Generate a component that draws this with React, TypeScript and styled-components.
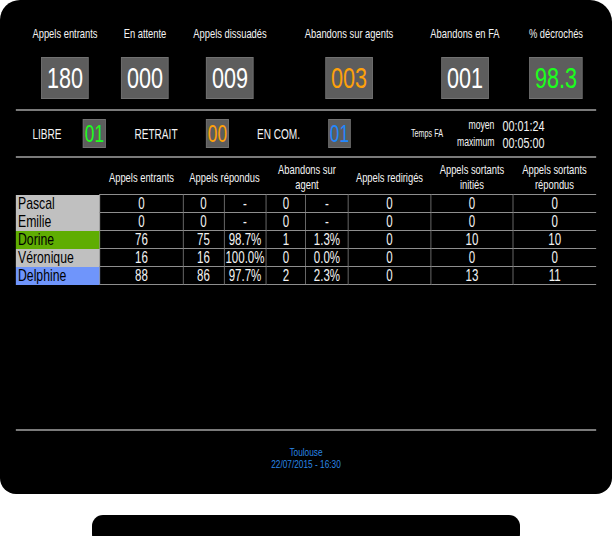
import styled, { createGlobalStyle } from 'styled-components';

// the wallboard font is a narrow grotesque: we lay out wide and squeeze the whole screen
const SQUEEZE = 0.72;
const w = (px: number) => `${(px / SQUEEZE).toFixed(2)}px`;

interface Counter {
  label: string;
  value: string;
  color: string;
}

interface Agent {
  name: string;
  bg: string;
  values: string[];
}

const counters: Counter[] = [
  { label: 'Appels entrants', value: '180', color: '#ffffff' },
  { label: 'En attente', value: '000', color: '#ffffff' },
  { label: 'Appels dissuadés', value: '009', color: '#ffffff' },
  { label: 'Abandons sur agents', value: '003', color: '#ffa10a' },
  { label: 'Abandons en FA', value: '001', color: '#ffffff' },
  { label: '% décrochés', value: '98.3', color: '#1cff1c' },
];

const counterWidths = [98, 62, 108, 130, 102, 80];

const agents: Agent[] = [
  { name: 'Pascal', bg: '#c0c0c0', values: ['0', '0', '-', '0', '-', '0', '0', '0'] },
  { name: 'Emilie', bg: '#c0c0c0', values: ['0', '0', '-', '0', '-', '0', '0', '0'] },
  { name: 'Dorine', bg: '#5fad02', values: ['76', '75', '98.7%', '1', '1.3%', '0', '10', '10'] },
  { name: 'Véronique', bg: '#c0c0c0', values: ['16', '16', '100.0%', '0', '0.0%', '0', '0', '0'] },
  { name: 'Delphine', bg: '#6f95fb', values: ['88', '86', '97.7%', '2', '2.3%', '0', '13', '11'] },
];

const columnWidths = [84, 83, 41, 42, 40, 42, 83, 82, 83];

const GlobalStyle = createGlobalStyle`
  html, body {
    margin: 0;
    padding: 0;
    background: #fff;
  }
  body {
    font-family: 'Liberation Sans', Arial, sans-serif;
  }
`;

const Monitor = styled.div`
  width: 612px;
  height: 536px;
  overflow: hidden;
  display: flex;
  flex-direction: column;
  align-items: center;
`;

const Screen = styled.div`
  width: 612px;
  height: 494px;
  flex-shrink: 0;
  background: #000;
  border-radius: 20px 22px 16px 16px;
  overflow: hidden;
`;

const Content = styled.div`
  width: ${w(612)};
  height: 100%;
  box-sizing: border-box;
  padding: 26px ${w(16)} 0;
  display: flex;
  flex-direction: column;
  color: #f4f4f4;
  transform: scaleX(${SQUEEZE});
  transform-origin: 0 0;
`;

const Stand = styled.div`
  width: 428px;
  height: 30px;
  flex-shrink: 0;
  margin-top: 21px;
  background: #000;
  border-radius: 11px;
`;

const Counters = styled.div`
  display: grid;
  grid-template-columns: ${counterWidths.map(w).join(' ')};
`;

const CounterCell = styled.div`
  display: flex;
  flex-direction: column;
  align-items: center;
`;

const CounterLabel = styled.div`
  font-size: 13px;
  line-height: 15px;
  white-space: nowrap;
`;

const CounterBox = styled.div<{ $color: string }>`
  margin-top: 16px;
  height: 42px;
  box-sizing: border-box;
  padding: 0 ${w(5)};
  background: #5d5d5d;
  border: 1px solid #727272;
  font-size: 30px;
  line-height: 40px;
  color: ${(p) => p.$color};
`;

const Divider = styled.div<{ $top: number }>`
  height: 2px;
  margin-top: ${(p) => p.$top}px;
  background: #7a7a7a;
  align-self: stretch;
`;

const StatusRow = styled.div`
  display: flex;
  align-items: center;
  height: 29px;
  margin-top: 8px;
`;

const StatusLabel = styled.div<{ $w: number; $shift?: number }>`
  width: ${(p) => w(p.$w)};
  box-sizing: border-box;
  padding-right: ${(p) => w(p.$shift ?? 0)};
  text-align: center;
  font-size: 14px;
  white-space: nowrap;
`;

const StatusBox = styled.div<{ $color: string }>`
  width: ${w(23)};
  height: 29px;
  box-sizing: border-box;
  background: #5d5d5d;
  border: 1px solid #727272;
  text-align: center;
  font-size: 24px;
  line-height: 27px;
  color: ${(p) => p.$color};
`;

const WaitLabel = styled.div`
  margin-left: ${w(60)};
  font-size: 10px;
  white-space: nowrap;
`;

const WaitKeys = styled.div`
  margin-left: ${w(14)};
  display: flex;
  flex-direction: column;
  align-items: flex-end;
  font-size: 12px;
  line-height: 17px;
`;

const WaitValues = styled.div`
  margin-left: ${w(8)};
  display: flex;
  flex-direction: column;
  font-size: 15px;
  line-height: 17px;
`;

const Stats = styled.table`
  width: ${w(580)};
  margin-top: 2px;
  border-collapse: collapse;
  table-layout: fixed;
`;

const Col = styled.col<{ $w: number }>`
  width: ${(p) => w(p.$w)};
`;

const HeadCell = styled.th`
  height: 34px;
  padding: 0;
  font-weight: normal;
  font-size: 13px;
  line-height: 15px;
  text-align: center;
  vertical-align: middle;
  white-space: nowrap;
`;

const NameCell = styled.td<{ $bg: string }>`
  height: 17px;
  padding: 0 0 0 ${w(2)};
  background: ${(p) => p.$bg};
  color: #000;
  font-size: 17px;
  line-height: 17px;
  white-space: nowrap;
`;

const ValueCell = styled.td`
  height: 17px;
  padding: 0;
  border: 1px solid #8e8e8e;
  text-align: center;
  font-size: 16px;
  line-height: 17px;
  white-space: nowrap;

  &:last-child {
    border-right: none;
  }
`;

const Footer = styled.div`
  margin-top: auto;
  padding-bottom: 24px;
  display: flex;
  flex-direction: column;
  align-items: center;
`;

const Place = styled.div`
  margin-top: 15px;
  color: #2a87e6;
  font-size: 11.5px;
  line-height: 12px;
  text-align: center;
`;

const App = () => {
  return (
    <>
      <GlobalStyle />
      <Monitor>
        <Screen>
          <Content>
            <Counters>
              {counters.map((c) => (
                <CounterCell key={c.label}>
                  <CounterLabel>{c.label}</CounterLabel>
                  <CounterBox $color={c.color}>{c.value}</CounterBox>
                </CounterCell>
              ))}
            </Counters>

            <Divider $top={10} />

            <StatusRow>
              <StatusLabel $w={67} $shift={5}>LIBRE</StatusLabel>
              <StatusBox $color="#1cff1c">01</StatusBox>
              <StatusLabel $w={100}>RETRAIT</StatusLabel>
              <StatusBox $color="#ffa10a">00</StatusBox>
              <StatusLabel $w={99}>EN COM.</StatusLabel>
              <StatusBox $color="#2288ff">01</StatusBox>
              <WaitLabel>Temps FA</WaitLabel>
              <WaitKeys>
                <span>moyen</span>
                <span>maximum</span>
              </WaitKeys>
              <WaitValues>
                <span>00:01:24</span>
                <span>00:05:00</span>
              </WaitValues>
            </StatusRow>

            <Divider $top={8} />

            <Stats>
              <colgroup>
                {columnWidths.map((cw, i) => (
                  <Col key={i} $w={cw} />
                ))}
              </colgroup>
              <thead>
                <tr>
                  <HeadCell />
                  <HeadCell>Appels entrants</HeadCell>
                  <HeadCell colSpan={2}>Appels répondus</HeadCell>
                  <HeadCell colSpan={2}>
                    Abandons sur
                    <br />
                    agent
                  </HeadCell>
                  <HeadCell>Appels redirigés</HeadCell>
                  <HeadCell>
                    Appels sortants
                    <br />
                    initiés
                  </HeadCell>
                  <HeadCell>
                    Appels sortants
                    <br />
                    répondus
                  </HeadCell>
                </tr>
              </thead>
              <tbody>
                {agents.map((a) => (
                  <tr key={a.name}>
                    <NameCell $bg={a.bg}>{a.name}</NameCell>
                    {a.values.map((v, i) => (
                      <ValueCell key={i}>{v}</ValueCell>
                    ))}
                  </tr>
                ))}
              </tbody>
            </Stats>

            <Footer>
              <Divider $top={0} />
              <Place>
                Toulouse
                <br />
                22/07/2015 - 16:30
              </Place>
            </Footer>
          </Content>
        </Screen>
        <Stand />
      </Monitor>
    </>
  );
};

export default App;
